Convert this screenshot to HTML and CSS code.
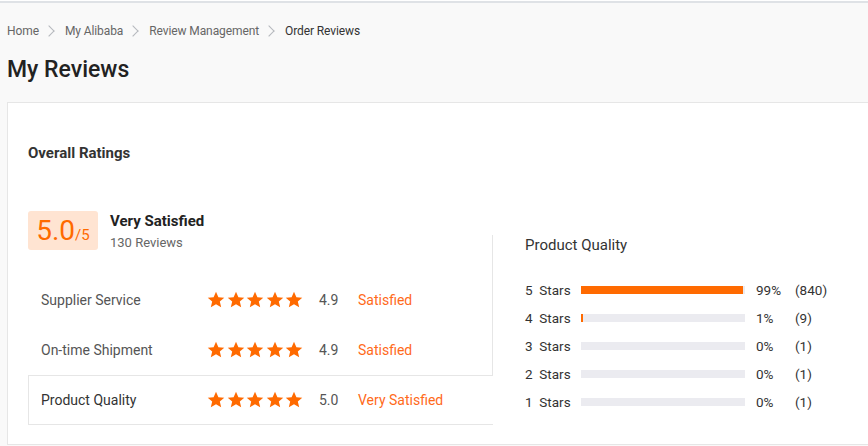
FILE: index.html
```html
<!DOCTYPE html>
<html lang="en">
<head>
    <meta charset="UTF-8">
    <title>My Reviews</title>
    <link rel="stylesheet" href="styles.css">
</head>
<body>
    <svg width="0" height="0" class="defs">
        <symbol id="star" viewBox="0 0 24 24">
            <path d="M12 1l3.2 7.2 7.8.7-5.9 5.2 1.8 7.7L12 17.8l-6.9 4 1.8-7.7L1 8.9l7.8-.7z"/>
        </symbol>
    </svg>

    <div class="breadcrumb">
        <a href="#">Home</a>
        <span class="sep"></span>
        <a href="#">My Alibaba</a>
        <span class="sep"></span>
        <a href="#">Review Management</a>
        <span class="sep"></span>
        <span class="current">Order Reviews</span>
    </div>
    <h1 class="page-title">My Reviews</h1>

    <div class="card">
        <h2 class="card-title">Overall Ratings</h2>

        <div class="ratings">
            <div class="left-col">
                <div class="summary">
                    <div class="score-box">5.0<span class="out-of">/5</span></div>
                    <div>
                        <div class="summary-label">Very Satisfied</div>
                        <div class="summary-count">130 Reviews</div>
                    </div>
                </div>

                <div class="rating-row">
                    <span class="row-name">Supplier Service</span>
                    <span class="stars">
                        <svg><use href="#star"/></svg><svg><use href="#star"/></svg><svg><use href="#star"/></svg><svg><use href="#star"/></svg><svg><use href="#star"/></svg>
                    </span>
                    <span class="row-score">4.9</span>
                    <span class="row-level">Satisfied</span>
                </div>
                <div class="rating-row">
                    <span class="row-name">On-time Shipment</span>
                    <span class="stars">
                        <svg><use href="#star"/></svg><svg><use href="#star"/></svg><svg><use href="#star"/></svg><svg><use href="#star"/></svg><svg><use href="#star"/></svg>
                    </span>
                    <span class="row-score">4.9</span>
                    <span class="row-level">Satisfied</span>
                </div>
                <div class="rating-row active">
                    <span class="row-name">Product Quality</span>
                    <span class="stars">
                        <svg><use href="#star"/></svg><svg><use href="#star"/></svg><svg><use href="#star"/></svg><svg><use href="#star"/></svg><svg><use href="#star"/></svg>
                    </span>
                    <span class="row-score">5.0</span>
                    <span class="row-level">Very Satisfied</span>
                </div>
            </div>

            <div class="dist-panel">
                <div class="dist-title">Product Quality</div>
                <div class="dist-list">
                    <div class="dist-row">
                        <span class="dist-label">5&nbsp; Stars</span>
                        <span class="bar"><span class="fill" style="width: 99%"></span></span>
                        <span class="pct">99%</span>
                        <span class="count">(840)</span>
                    </div>
                    <div class="dist-row">
                        <span class="dist-label">4&nbsp; Stars</span>
                        <span class="bar"><span class="fill" style="width: 1%"></span></span>
                        <span class="pct">1%</span>
                        <span class="count">(9)</span>
                    </div>
                    <div class="dist-row">
                        <span class="dist-label">3&nbsp; Stars</span>
                        <span class="bar"><span class="fill" style="width: 0%"></span></span>
                        <span class="pct">0%</span>
                        <span class="count">(1)</span>
                    </div>
                    <div class="dist-row">
                        <span class="dist-label">2&nbsp; Stars</span>
                        <span class="bar"><span class="fill" style="width: 0%"></span></span>
                        <span class="pct">0%</span>
                        <span class="count">(1)</span>
                    </div>
                    <div class="dist-row">
                        <span class="dist-label">1&nbsp; Stars</span>
                        <span class="bar"><span class="fill" style="width: 0%"></span></span>
                        <span class="pct">0%</span>
                        <span class="count">(1)</span>
                    </div>
                </div>
            </div>
        </div>
    </div>
</body>
</html>
```

FILE: styles.css
```css
html {
    overflow: hidden;
}
body {
    margin: 0;
    font-family: Roboto, "Liberation Sans", Arial, sans-serif;
    background-color: #f9f9f9;
    color: #333;
    border-top: 1px solid #ffffff;
}
body::before {
    content: "";
    display: block;
    height: 2px;
    background-color: #dfe2e6;
}
.defs {
    position: absolute;
}
.breadcrumb {
    display: flex;
    align-items: center;
    padding: 18px 0 0 7px;
    height: 20px;
    font-size: 12px;
    letter-spacing: -0.1px;
}
.breadcrumb a {
    color: #666;
    text-decoration: none;
}
.breadcrumb .current {
    color: #333;
}
.sep {
    width: 7px;
    height: 7px;
    margin: 0 12px 0 6px;
    border-top: 1px solid #b5b8bd;
    border-right: 1px solid #b5b8bd;
    transform: rotate(45deg);
}
.page-title {
    margin: 14px 0 0 7px;
    font-size: 23px;
    font-weight: 500;
    line-height: 30px;
    color: #222;
}
.card {
    width: 900px;
    height: 343px;
    margin: 17px 0 0 7px;
    padding: 40px 0 0 20px;
    box-sizing: border-box;
    background-color: #fff;
    border: 1px solid #e6e6e6;
}
.card-title {
    margin: 0;
    font-size: 15px;
    font-weight: 700;
    line-height: 20px;
    color: #333;
}
.ratings {
    display: flex;
    margin-top: 48px;
}
.left-col {
    width: 464px;
    flex-shrink: 0;
}
.summary {
    display: flex;
    align-items: center;
    gap: 12px;
    margin-bottom: 25px;
}
.score-box {
    width: 70px;
    height: 39px;
    border-radius: 3px;
    background-color: #ffe4d2;
    color: #ff6a00;
    font-size: 28px;
    line-height: 40px;
    text-align: center;
}
.out-of {
    font-size: 15px;
}
.summary-label {
    font-size: 15px;
    font-weight: 700;
    line-height: 18px;
    color: #222;
}
.summary-count {
    margin-top: 5px;
    font-size: 13px;
    color: #666;
}
.rating-row {
    display: flex;
    align-items: center;
    height: 48px;
    padding-left: 12px;
    border: 1px solid transparent;
    border-right: none;
    font-size: 14px;
}
.rating-row.active {
    position: relative;
    z-index: 1;
    margin-right: -1px;
    border-color: #e6e6e6;
    background-color: #fff;
}
.row-name {
    width: 166px;
    color: #555;
}
.rating-row.active .row-name {
    color: #333;
}
.stars {
    display: flex;
    gap: 1.5px;
    width: 112px;
    fill: #ff6a00;
}
.stars svg {
    width: 18px;
    height: 18px;
}
.row-score {
    width: 39px;
    color: #555;
}
.row-level {
    color: #ff6a1a;
}
.dist-panel {
    flex: 1;
    margin-top: 24px;
    padding-left: 32px;
    border-left: 1px solid #e6e6e6;
}
.dist-title {
    font-size: 15px;
    line-height: 20px;
    color: #333;
}
.dist-list {
    margin-top: 21px;
}
.dist-row {
    display: flex;
    align-items: center;
    height: 28px;
    font-size: 13.5px;
    color: #333;
}
.dist-label {
    width: 56px;
}
.bar {
    width: 164px;
    height: 8px;
    margin-right: 11px;
    background-color: #ebebf0;
}
.fill {
    display: block;
    height: 100%;
    background-color: #ff6a00;
}
.pct {
    width: 39px;
}
```
